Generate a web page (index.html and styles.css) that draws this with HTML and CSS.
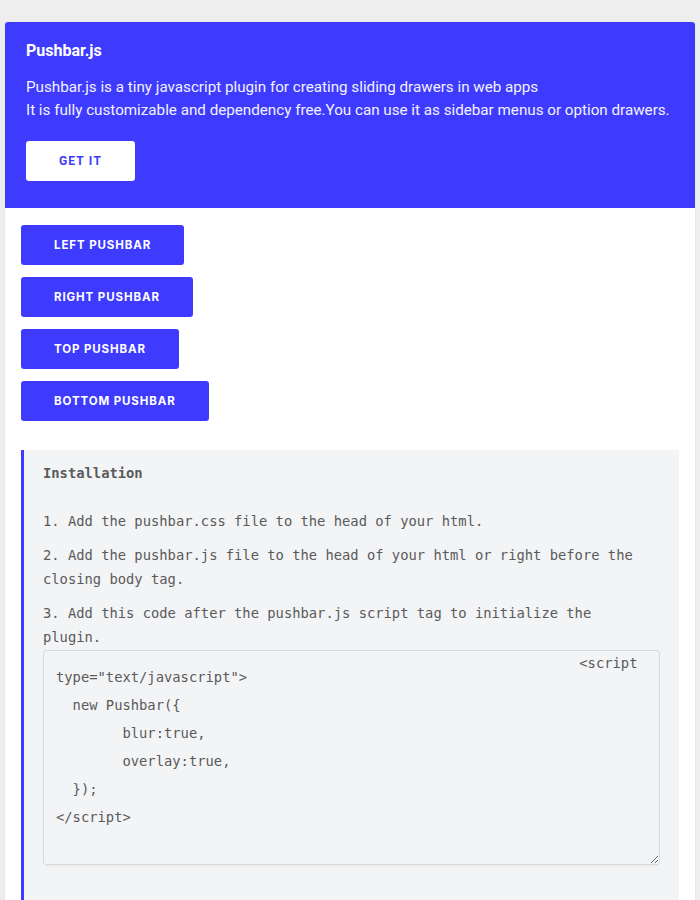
FILE: index.html
```html
<!DOCTYPE html>
<html>
<head>
<meta charset="utf-8">
<title>Pushbar.js</title>
<link rel="stylesheet" href="styles.css">
</head>
<body>
<div class="card">
  <header class="hero">
    <h1 class="hero-title">Pushbar.js</h1>
    <p class="hero-text">Pushbar.js is a tiny javascript plugin for creating sliding drawers in web apps<br>It is fully customizable and dependency free.You can use it as sidebar menus or option drawers.</p>
    <a class="get-btn">GET IT</a>
  </header>
  <main class="content">
    <div class="btn-list">
      <button class="push-btn">LEFT PUSHBAR</button>
      <button class="push-btn">RIGHT PUSHBAR</button>
      <button class="push-btn">TOP PUSHBAR</button>
      <button class="push-btn">BOTTOM PUSHBAR</button>
    </div>
    <section class="install">
      <h2 class="install-title">Installation</h2>
      <p class="step">1. Add the pushbar.css file to the head of your html.</p>
      <p class="step">2. Add the pushbar.js file to the head of your html or right before the closing body tag.</p>
      <p class="step last">3. Add this code after the pushbar.js script tag to initialize the plugin.</p>
      <textarea class="code" spellcheck="false">                                                               &lt;script
type="text/javascript"&gt;

  new Pushbar({

        blur:true,

        overlay:true,

  });

&lt;/script&gt;</textarea>
    </section>
  </main>
</div>
</body>
</html>
```
FILE: styles.css
```css
html, body {
  margin: 0;
  padding: 0;
}
body {
  background: #eeeeee;
  font-family: Roboto, "Liberation Sans", sans-serif;
  height: 900px;
  overflow: hidden;
}
.card {
  margin: 22px 5px 0;
  background: #ffffff;
  border-radius: 3px 3px 0 0;
  box-shadow: 0 0 2px rgba(0,0,0,0.08);
  min-height: 900px;
}
.hero {
  background: #3e3bff;
  color: #ffffff;
  padding: 19px 21px 27px;
  border-radius: 3px 3px 0 0;
}
.hero-title {
  margin: 0;
  font-size: 16px;
  line-height: 20px;
  font-weight: 700;
}
.hero-text {
  margin: 15px 0 19px;
  font-size: 15.2px;
  line-height: 23px;
  color: #f2f2ff;
}
.get-btn {
  display: inline-flex;
  align-items: center;
  justify-content: center;
  width: 109px;
  height: 40px;
  background: #ffffff;
  color: #3e3bff;
  border-radius: 3px;
  font-size: 12px;
  font-weight: 700;
  letter-spacing: 1.2px;
}
.content {
  padding: 17px 16px 0;
}
.btn-list {
  display: flex;
  flex-direction: column;
  align-items: flex-start;
  gap: 12px;
}
.push-btn {
  height: 40px;
  padding: 0 33px;
  border: none;
  border-radius: 3px;
  background: #3e3bff;
  color: #ffffff;
  font-family: Inter, "Liberation Sans", sans-serif;
  font-size: 11.5px;
  font-weight: 700;
  letter-spacing: 0.9px;
}
.install {
  margin-top: 29px;
  background: #f3f4f6;
  border-left: 3px solid #3e3bff;
  padding: 11px 19px 30px 19px;
  font-family: "DejaVu Sans Mono", "Liberation Mono", monospace;
  color: #5a5a5a;
  min-height: 500px;
}
.install-title {
  margin: 0 0 24px;
  font-size: 13.8px;
  line-height: 24px;
  font-weight: 700;
}
.step {
  margin: 0 8px 10px 0;
  font-size: 13.8px;
  line-height: 24px;
}
.step.last {
  margin-bottom: 1px;
}
.code {
  display: block;
  box-sizing: border-box;
  width: 617px;
  height: 215px;
  padding: 5px 12px;
  border: 1px solid #d9d9d9;
  border-radius: 3px;
  background: #f3f4f6;
  color: #5a5a5a;
  font-family: "DejaVu Sans Mono", "Liberation Mono", monospace;
  font-size: 13.8px;
  line-height: 14px;
  white-space: pre;
  overflow: hidden;
  resize: both;
  outline: none;
  box-shadow: 0 4px 0 -2px #ececec;
}
```
